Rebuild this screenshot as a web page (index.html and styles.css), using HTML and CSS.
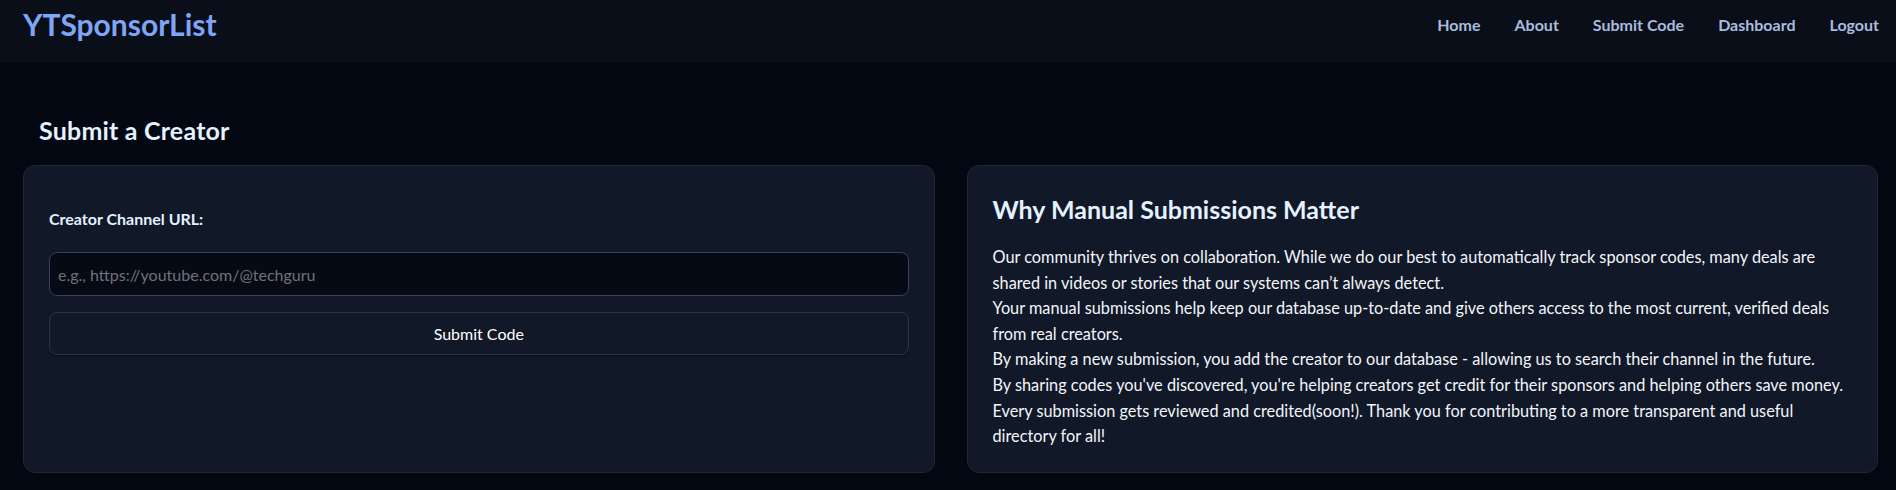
FILE: index.html
```html
<!DOCTYPE html>
<html lang="en">
<head>
    <meta charset="UTF-8">
    <title>YTSponsorList / Submit</title>
    <link rel="stylesheet" href="styles.css">
</head>
<body>
    <header class="topbar">
        <a href="/" class="brand">YTSponsorList</a>
        <nav class="nav-links">
            <a href="/">Home</a>
            <a href="/about">About</a>
            <a href="/submit">Submit Code</a>
            <a href="/dashboard">Dashboard</a>
            <a href="/logout">Logout</a>
        </nav>
    </header>

    <main class="page">
        <h1 class="page-title">Submit a Creator</h1>

        <div class="grid">
            <div class="card form-card">
                <form class="submit-form" action="/submit" method="POST">
                    <label for="channelUrl">Creator Channel URL:</label>
                    <input type="text" id="channelUrl" name="channel" placeholder="e.g., https://youtube.com/@techguru" required>
                    <button type="submit" class="submit-btn">Submit Code</button>
                </form>
            </div>

            <div class="card info-card">
                <h2>Why Manual Submissions Matter</h2>
                <p>
                    Our community thrives on collaboration. While we do our best to automatically track sponsor codes, many deals are shared in videos or stories that our systems can’t always detect.<br>
                    Your manual submissions help keep our database up-to-date and give others access to the most current, verified deals from real creators.<br>
                    By making a new submission, you add the creator to our database - allowing us to search their channel in the future.<br>
                    By sharing codes you've discovered, you're helping creators get credit for their sponsors and helping others save money.<br>
                    Every submission gets reviewed and credited(soon!). Thank you for contributing to a more transparent and useful directory for all!
                </p>
            </div>
        </div>
    </main>
</body>
</html>
```

FILE: styles.css
```css
body {
    margin: 0;
    font-family: Lato, "Noto Sans", Arial, sans-serif;
    background-color: #030712;
    color: #ffffff;
}

a {
    text-decoration: none;
}

/* top bar */
.topbar {
    display: flex;
    justify-content: space-between;
    align-items: center;
    height: 48px;
    padding: 0 17px 15px 23px;
    background-color: #0a0e18;
}

.brand {
    font-size: 30px;
    font-weight: bold;
    color: #7da6f6;
}

.nav-links {
    display: flex;
    gap: 34px;
}

.nav-links a {
    font-size: 16px;
    font-weight: bold;
    color: #a9bcdf;
}

.nav-links a:hover {
    color: #ffffff;
}

/* page */
.page {
    padding: 53px 18px 16px 23px;
}

.page-title {
    margin: 0 0 20px 16px;
    font-size: 25px;
    line-height: 29px;
    font-weight: bold;
    letter-spacing: 0.2px;
    color: #e4f1ff;
}

.grid {
    display: grid;
    grid-template-columns: 1fr 1fr;
    gap: 32px;
}

.card {
    background-color: #111827;
    border: 1px solid #1f2738;
    border-radius: 12px;
    padding: 29px 25px 23px 25px;
}

/* submit form */
.submit-form {
    display: flex;
    flex-direction: column;
    margin-top: 14px;
}

.submit-form label {
    font-size: 16px;
    line-height: 20px;
    font-weight: bold;
    color: #e4f1ff;
    margin-bottom: 23px;
}

.submit-form input[type="text"] {
    height: 44px;
    padding: 0 8px;
    border: 1px solid #374060;
    border-radius: 8px;
    background-color: #060a15;
    color: #ffffff;
    font-family: inherit;
    font-size: 16px;
    box-sizing: border-box;
}

.submit-form input::placeholder {
    color: #71717a;
}

.submit-form input:focus {
    outline: none;
    border-color: #7da6f6;
}

.submit-btn {
    height: 43px;
    margin-top: 16px;
    border: 1px solid #2c3550;
    border-radius: 8px;
    background-color: #111827;
    color: #ffffff;
    font-family: inherit;
    font-size: 16px;
    cursor: pointer;
    box-shadow: 0 1px 2px rgba(0, 0, 0, 0.4);
}

.submit-btn:hover {
    background-color: #1a2233;
}

/* info card */
.info-card h2 {
    margin: 0 0 20px 0;
    font-size: 25px;
    line-height: 29px;
    font-weight: bold;
    color: #e4f1ff;
}

.info-card p {
    margin: 0;
    font-size: 16.3px;
    line-height: 25.6px;
    color: #f3f6fb;
}
```
